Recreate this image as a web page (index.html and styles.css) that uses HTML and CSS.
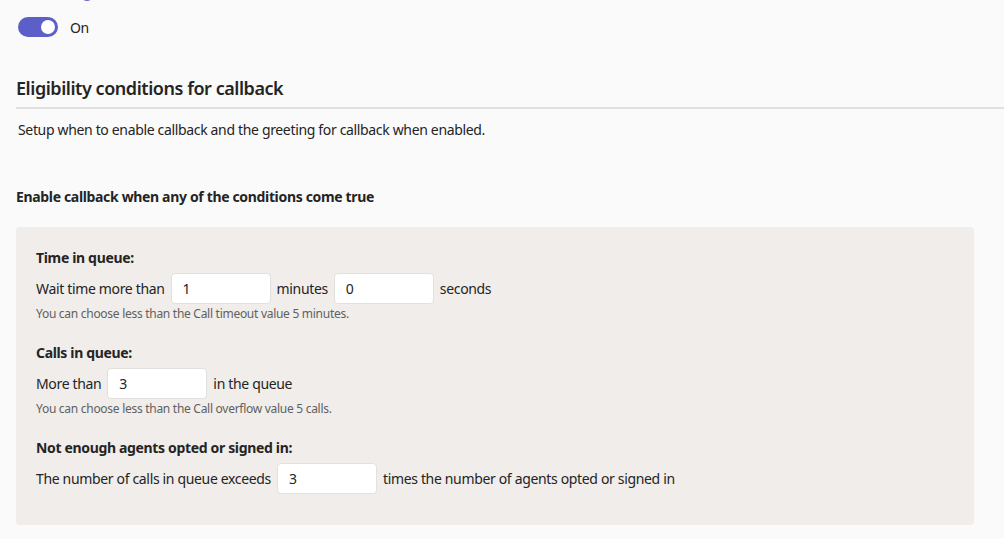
FILE: index.html
```html
<!DOCTYPE html>
<html lang="en">
<head>
    <meta charset="UTF-8">
    <meta name="viewport" content="width=device-width, initial-scale=1.0">
    <title>Callback settings</title>
    <link rel="stylesheet" href="styles.css">
</head>
<body>
    <div class="page">
        <div class="cut-label">Callback <span class="info-dot"></span></div>

        <div class="toggle-row">
            <span class="toggle"><span class="knob"></span></span>
            <span>On</span>
        </div>

        <h2 class="section-title">Eligibility conditions for callback</h2>
        <p class="section-desc">Setup when to enable callback and the greeting for callback when enabled.</p>

        <h3 class="sub-title">Enable callback when any of the conditions come true</h3>

        <div class="panel">
            <div class="condition">
                <div class="cond-title">Time in queue:</div>
                <div class="cond-row">
                    <span>Wait time more than</span>
                    <input class="field" type="text" value="1">
                    <span>minutes</span>
                    <input class="field" type="text" value="0">
                    <span>seconds</span>
                </div>
                <div class="hint">You can choose less than the Call timeout value 5 minutes.</div>
            </div>

            <div class="condition">
                <div class="cond-title">Calls in queue:</div>
                <div class="cond-row">
                    <span>More than</span>
                    <input class="field" type="text" value="3">
                    <span>in the queue</span>
                </div>
                <div class="hint">You can choose less than the Call overflow value 5 calls.</div>
            </div>

            <div class="condition">
                <div class="cond-title">Not enough agents opted or signed in:</div>
                <div class="cond-row">
                    <span>The number of calls in queue exceeds</span>
                    <input class="field" type="text" value="3">
                    <span>times the number of agents opted or signed in</span>
                </div>
            </div>
        </div>
    </div>
</body>
</html>
```

FILE: styles.css
```css
body {
    margin: 0;
    background: #fafafa;
    color: #242424;
    font-family: 'Noto Sans', 'Open Sans', sans-serif;
    font-size: 14px;
    letter-spacing: -0.34px;
    overflow: hidden;
}

.page {
    padding-left: 16px;
}

.cut-label {
    margin-top: -17px;
    padding-left: 4px;
    height: 20px;
    line-height: 20px;
    font-weight: 600;
    color: #424242;
}

.info-dot {
    display: inline-block;
    margin-left: 2px;
    width: 12px;
    height: 12px;
    border-radius: 50%;
    border: 1px solid #5b5fc7;
    vertical-align: middle;
}

.toggle-row {
    display: flex;
    align-items: center;
    gap: 12px;
    margin-top: 14px;
    padding-left: 2px;
    height: 20px;
}

.toggle {
    display: flex;
    align-items: center;
    justify-content: flex-end;
    width: 40px;
    height: 20px;
    padding: 0 3px;
    box-sizing: border-box;
    border-radius: 10px;
    background: #5b5fc7;
}

.knob {
    width: 14px;
    height: 14px;
    border-radius: 50%;
    background: #fff;
}

.section-title {
    margin: 39px 0 0;
    padding-bottom: 7px;
    border-bottom: 2px solid #e0e0e0;
    font-size: 18px;
    font-weight: 600;
    line-height: 24px;
    letter-spacing: -0.45px;
}

.section-desc {
    margin: 11px 0 0;
    padding-left: 2px;
    line-height: 20px;
}

.sub-title {
    margin: 47px 0 0;
    font-size: 14px;
    font-weight: 700;
    line-height: 20px;
}

.panel {
    margin: 20px 30px 14px 0;
    padding: 21px 20px 31px;
    background: #f0edea;
    border-radius: 4px;
}

.condition + .condition {
    margin-top: 21px;
}

.cond-title {
    font-weight: 700;
    line-height: 20px;
}

.cond-row {
    display: flex;
    align-items: center;
    gap: 6px;
    margin-top: 5px;
}

.field {
    width: 100px;
    height: 31px;
    box-sizing: border-box;
    padding: 0 11px;
    border: 1px solid #e3e1de;
    border-radius: 4px;
    background: #fff;
    color: #242424;
    font-family: inherit;
    font-size: 14px;
}

.hint {
    margin-top: 2px;
    font-size: 12px;
    line-height: 16px;
    letter-spacing: -0.28px;
    color: #616161;
}
```
